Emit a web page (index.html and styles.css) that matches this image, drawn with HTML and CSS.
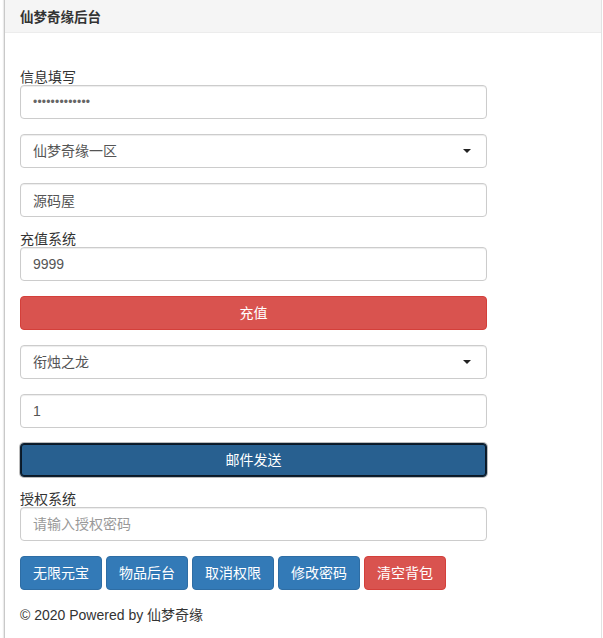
FILE: index.html
```html
<!DOCTYPE html>
<html lang="zh-CN">
<head>
<meta charset="utf-8">
<title>仙梦奇缘后台</title>
<link rel="stylesheet" href="styles.css">
</head>
<body>
<div class="panel">
  <div class="panel-heading">仙梦奇缘后台</div>
  <div class="panel-body">
    <form class="form">
      <label class="label">信息填写</label>
      <input class="control control-password" type="password" value="1234567890123">
      <div class="select-wrap">
        <select class="control select"><option>仙梦奇缘一区</option></select>
      </div>
      <input class="control" type="text" value="源码屋">
      <label class="label">充值系统</label>
      <input class="control" type="text" value="9999">
      <button type="button" class="btn btn-danger btn-block">充值</button>
      <div class="select-wrap">
        <select class="control select"><option>衔烛之龙</option></select>
      </div>
      <input class="control" type="text" value="1">
      <button type="button" class="btn btn-primary btn-block btn-active">邮件发送</button>
      <label class="label">授权系统</label>
      <input class="control" type="text" placeholder="请输入授权密码">
      <div class="btn-row">
        <button type="button" class="btn btn-primary">无限元宝</button>
        <button type="button" class="btn btn-primary">物品后台</button>
        <button type="button" class="btn btn-primary">取消权限</button>
        <button type="button" class="btn btn-primary">修改密码</button>
        <button type="button" class="btn btn-danger">清空背包</button>
      </div>
      <p class="footer">© 2020 Powered by 仙梦奇缘</p>
    </form>
  </div>
</div>
</body>
</html>
```

FILE: styles.css
```css
html, body {
  margin: 0;
  padding: 0;
  background: #fff;
}
body {
  font-family: "Liberation Sans", Arial, "Noto Sans CJK SC", sans-serif;
  font-size: 14px;
  color: #333;
  height: 638px;
  overflow: hidden;
}
.panel {
  margin: 0 1px 0 4px;
  border-left: 1px solid #c9c9c9;
  border-right: 1px solid #e2e2e2;
  box-shadow: -1px 0 1px rgba(0,0,0,0.08);
  height: 638px;
  background: #fff;
}
.panel-heading {
  height: 33px;
  box-sizing: border-box;
  display: flex;
  align-items: center;
  padding: 0 15px;
  background: #f5f5f5;
  border-bottom: 1px solid #ececec;
  font-weight: bold;
  font-size: 13.5px;
  color: #333;
}
.panel-body {
  padding: 37px 15px 0 15px;
}
.form {
  width: 467px;
  display: flex;
  flex-direction: column;
}
.label {
  display: block;
  height: 15px;
  line-height: 15px;
  font-size: 14px;
  color: #333;
  margin: 0;
}
.control {
  display: block;
  box-sizing: border-box;
  width: 100%;
  height: 34px;
  padding: 6px 12px;
  margin: 0 0 15px 0;
  font-family: inherit;
  font-size: 14px;
  line-height: 20px;
  color: #555;
  background: #fff;
  border: 1px solid #ccc;
  border-radius: 4px;
  box-shadow: inset 0 1px 1px rgba(0,0,0,0.075);
  outline: none;
}
.control-password {
  font-size: 12px;
  letter-spacing: 0.2px;
  color: #666;
}
.control::placeholder {
  color: #999;
}
.select-wrap {
  position: relative;
}
.select {
  -webkit-appearance: none;
  appearance: none;
}
.select-wrap::after {
  content: "";
  position: absolute;
  right: 16px;
  top: 15px;
  width: 0;
  height: 0;
  border-left: 4px solid transparent;
  border-right: 4px solid transparent;
  border-top: 4px solid #222;
}
.btn {
  box-sizing: border-box;
  height: 34px;
  padding: 6px 12px;
  font-family: inherit;
  font-size: 14px;
  line-height: 20px;
  border: 1px solid transparent;
  border-radius: 4px;
  color: #fff;
  cursor: pointer;
  white-space: nowrap;
}
.btn-block {
  display: block;
  width: 100%;
  margin: 0 0 15px 0;
}
.btn-primary {
  background: #337ab7;
  border-color: #2e6da4;
}
.btn-danger {
  background: #d9534f;
  border-color: #d43f3a;
}
.btn-active {
  background: #286090;
  border: 1px solid #0e1f2f;
  box-shadow: inset 0 0 0 1px #0b1825, 0 0 0 1px rgba(120,120,120,0.5);
}
.btn-row {
  display: flex;
  gap: 4px;
  margin-bottom: 15px;
}
.footer {
  margin: 0;
  line-height: 20px;
  font-size: 14px;
  color: #333;
}
```
